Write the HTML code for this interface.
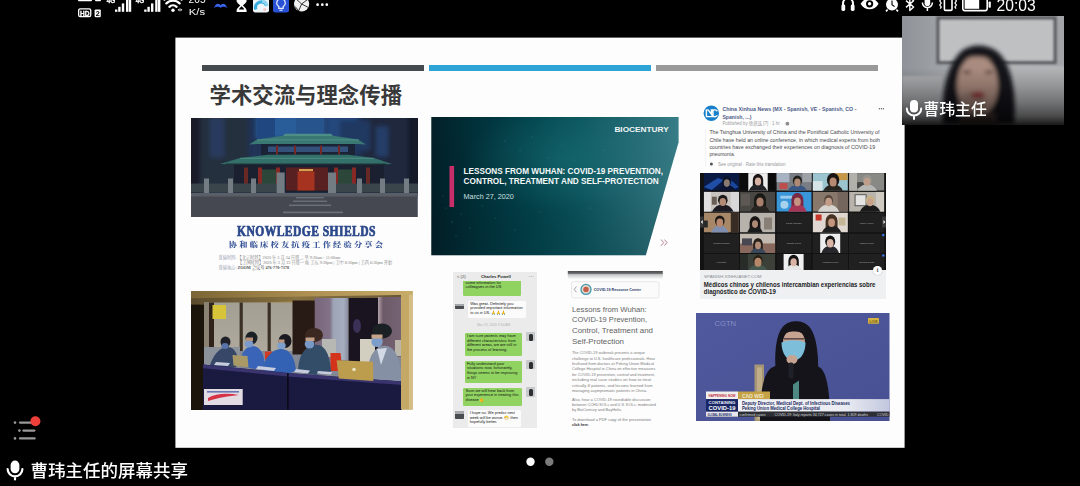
<!DOCTYPE html>
<html lang="zh">
<head>
<meta charset="utf-8">
<title>曹玮主任的屏幕共享</title>
<style>
html,body{margin:0;padding:0;background:#000;}
body{width:1080px;height:486px;overflow:hidden;position:relative;font-family:"Liberation Sans","Noto Sans CJK SC",sans-serif;color:#fff;}
.abs{position:absolute;}
.t{position:absolute;white-space:nowrap;line-height:1;}
#slide{position:absolute;left:175px;top:37px;width:730px;height:411px;overflow:hidden;}
#slide .abs,#slide .t{position:absolute;}
/* coordinates inside #slide are page coords via wrapper shift */
#in{position:absolute;left:-175px;top:-37px;width:1080px;height:486px;opacity:.999;will-change:opacity;}
.bar{position:absolute;top:65px;height:6px;}
</style>
</head>
<body>
<div id="root" style="position:absolute;left:0;top:0;width:1080px;height:486px;overflow:hidden;opacity:.999;will-change:opacity;filter:blur(.4px);">

<!-- ===== shared screen slide ===== -->
<div id="slide"><div id="in">
  <svg class="abs" style="left:175px;top:37px" width="730" height="411" viewBox="175 37 730 411"><rect x="175.400" y="37.600" width="729.200" height="410.200" fill="#ffffff"/></svg>
  <div class="bar" style="left:202px;width:222px;background:#474c51;"></div>
  <div class="bar" style="left:429px;width:221.5px;background:#2fa5d8;"></div>
  <div class="bar" style="left:656px;width:221.5px;background:#9b9b9b;"></div>
  <div class="t" id="title" style="left:209.5px;top:86px;font-size:21.4px;font-weight:bold;color:#3b3b3b;">学术交流与理念传播</div>

  <!-- temple photo -->
<svg class="abs" style="left:191px;top:117.500px" width="226.500" height="99.500" viewBox="191 117.500 226.500 99.500">
  <defs>
    <filter id="b1" x="-5%" y="-5%" width="110%" height="110%"><feGaussianBlur stdDeviation=".7"/></filter>
    <filter id="b2" x="-10%" y="-10%" width="120%" height="120%"><feGaussianBlur stdDeviation="2"/></filter>
    <linearGradient id="sky" x1="0" y1="0" x2="0" y2="1"><stop offset="0" stop-color="#213358"/><stop offset="1" stop-color="#27395a"/></linearGradient>
  </defs>
  <rect x="191" y="117.500" width="226.500" height="99.500" fill="url(#sky)"/>
  <g filter="url(#b2)">
    <rect x="186" y="112" width="62" height="80" fill="#283041"/><rect x="186" y="112" width="14" height="90" fill="#1a1f2b"/>
    <rect x="210" y="117" width="14" height="40" fill="#2a3d60"/>
    <rect x="256" y="114" width="68" height="24" fill="#2c5e9c"/>
    <rect x="326" y="114" width="32" height="24" fill="#27497e"/>
    <rect x="362" y="112" width="62" height="82" fill="#222c3f"/><rect x="408" y="112" width="14" height="82" fill="#171d2a"/><rect x="340" y="120" width="30" height="30" fill="#213a64"/>
    <rect x="376" y="126" width="12" height="30" fill="#27406a"/>
  </g>
  <g filter="url(#b1)">
    <!-- building towers behind -->
    <rect x="257" y="117" width="18" height="22" fill="#234a82"/>
    <rect x="296" y="117" width="28" height="20" fill="#2a5690"/>
    <!-- upper roof -->
    <path d="M249 144l8-5 29-4.200h44l28 4.200 8 5-10-.500h-97z" fill="#3a7a74"/>
    <path d="M283 135.600h50l-2-2.400h-46z" fill="#4f9088"/>
    <path d="M257 139.400h102" stroke="#5c9c92" stroke-width=".7"/>
    <!-- upper floor -->
    <rect x="261" y="143.500" width="94" height="11.500" fill="#1b2838"/>
    <rect x="268" y="146" width="80" height="5.500" fill="#36527c"/>
    <g fill="#7a2a28"><rect x="276" y="145" width="2" height="9"/><rect x="294" y="145" width="2" height="9"/><rect x="320" y="145" width="2" height="9"/><rect x="338" y="145" width="2" height="9"/></g>
    <!-- lower roof -->
    <path d="M220 163.500l20-6 28-3.300h80l26 3.300 18 6-14 .500h-144z" fill="#35726c"/>
    <path d="M240 157.800h134" stroke="#5c9c92" stroke-width=".7"/>
    <path d="M226 163.600h160" stroke="#1a2a30" stroke-width="1"/>
    <!-- lower floor -->
    <rect x="234" y="164" width="150" height="28" fill="#1a2430"/>
    <rect x="244" y="167" width="4" height="22" fill="#6a2a28"/><rect x="258" y="167" width="4" height="22" fill="#8a2c26"/>
    <rect x="276" y="167" width="4" height="22" fill="#8a2c26"/><rect x="352" y="167" width="4" height="22" fill="#8a2c26"/>
    <rect x="366" y="167" width="4" height="22" fill="#6a2a28"/><rect x="334" y="167" width="4" height="22" fill="#8a2c26"/>
    <rect x="262" y="169" width="14" height="16" fill="#2f4a3a"/><rect x="338" y="169" width="14" height="16" fill="#2f4a3a"/>
    <rect x="286" y="167" width="42" height="23" fill="#5a2320"/>
    <rect x="297.500" y="171" width="17" height="19" fill="#a83520"/>
    <rect x="299" y="168.500" width="14" height="2.200" fill="#d8a050"/>
    <!-- fence -->
    <rect x="191" y="183" width="92" height="9" fill="#3a464e"/><rect x="330" y="183" width="88" height="9" fill="#3a464e"/>
    <g fill="#757e84">
      <rect x="204" y="178" width="5" height="15"/><rect x="228" y="178" width="5" height="15"/><rect x="251" y="178" width="5" height="15"/>
      <rect x="276.700" y="172" width="8" height="22.500"/><rect x="328" y="172" width="8" height="22.500"/>
      <rect x="357" y="178" width="5" height="15"/><rect x="380" y="178" width="5" height="15"/><rect x="404" y="178" width="5" height="15"/>
    </g>
    <!-- ground -->
    <rect x="191" y="192.500" width="226.500" height="25" fill="#464a52"/>
    <rect x="191" y="192.500" width="226.500" height="3.500" fill="#5c6168"/>
    <g fill="#6c7178">
      <rect x="296" y="196.500" width="28" height="1.400"/><rect x="293" y="200" width="34" height="1.500"/><rect x="289" y="204" width="42" height="1.600"/><rect x="283" y="211" width="60" height="1.800"/>
    </g>
  </g>
</svg>

  <!-- knowledge shields captions -->
<div class="t" id="ks" style="left:237px;top:225.300px;font-family:'Liberation Serif','DejaVu Serif',serif;font-weight:bold;font-size:13.600px;color:#2c4a8c;letter-spacing:.5px;-webkit-text-stroke:.7px #2c4a8c;transform-origin:0 0;transform:scaleX(.852);">KNOWLEDGE SHIELDS</div>
<div class="t" id="ks2" style="left:228.800px;top:241.600px;font-family:'Liberation Serif','Noto Serif CJK SC',serif;font-weight:900;font-size:8.200px;color:#3d5a9c;letter-spacing:2.240px;transform-origin:0 0;transform:scaleY(.86);">协和临床校友抗疫工作经验分享会</div>
<div class="t" style="left:218.500px;top:256px;font-family:'Liberation Serif','Noto Serif CJK SC',serif;font-size:4.200px;color:#808080;"><span style="color:#8a94a8">直播时间:</span> 【北京时间】2020 年 3 月 24 日周二 早 9:30am - 11:00am</div>
<div class="t" style="left:238px;top:261px;font-family:'Liberation Serif','Noto Serif CJK SC',serif;font-size:4.200px;color:#808080;">【美国时间】2020 年 3 月 23 日周一 晚 美东 9:30pm | 美中 8:30pm | 美西 6:30pm 开始</div>
<div class="t" style="left:218.500px;top:266.400px;font-family:'Liberation Serif','Noto Serif CJK SC',serif;font-size:4.200px;color:#555;"><span style="color:#8a94a8">直播地点:</span> <b>ZOOM</b> 会议号 <b>476-770-7378</b></div>

  <!-- conference room photo -->
<svg class="abs" style="left:191px;top:291px" width="221.500" height="118.500" viewBox="191 291 221.500 118.500">
  <defs>
    <filter id="g1" x="-5%" y="-5%" width="110%" height="110%"><feGaussianBlur stdDeviation=".75"/></filter>
    <linearGradient id="gold" x1="0" y1="0" x2="1" y2="0"><stop offset="0" stop-color="#7d6637"/><stop offset=".5" stop-color="#ad9052"/><stop offset="1" stop-color="#c9ae6c"/></linearGradient>
    <linearGradient id="ceil" x1="0" y1="0" x2="1" y2="0"><stop offset="0" stop-color="#5e4e2e"/><stop offset=".5" stop-color="#8a7444"/><stop offset="1" stop-color="#6a5838"/></linearGradient>
    <linearGradient id="cur1" x1="0" y1="0" x2="1" y2="0"><stop offset="0" stop-color="#7a687c"/><stop offset=".45" stop-color="#84748a"/><stop offset=".55" stop-color="#9ea6b8"/><stop offset=".85" stop-color="#a8b0c0"/><stop offset="1" stop-color="#868a9e"/></linearGradient>
    <linearGradient id="cur2" x1="0" y1="0" x2="1" y2="0"><stop offset="0" stop-color="#b4a4a8"/><stop offset=".22" stop-color="#6e5c6a"/><stop offset="1" stop-color="#786674"/></linearGradient>
    <linearGradient id="pan" x1="0" y1="0" x2="0" y2="1"><stop offset="0" stop-color="#a5a195"/><stop offset="1" stop-color="#b0ab9e"/></linearGradient>
  </defs>
  <rect x="191" y="291" width="221.500" height="118.500" fill="url(#gold)"/>
  <g filter="url(#g1)">
    <path d="M191 297.500l211-3.500v4l-211 6.500z" fill="url(#ceil)"/>
    <rect x="189" y="304.500" width="15.500" height="108" fill="#1b1511"/>
    <rect x="204" y="340" width="197.500" height="42" fill="#858a96"/>
    <!-- wall panels -->
    <rect x="204" y="302.500" width="96" height="48.500" fill="url(#pan)"/>
    <rect x="204" y="302.500" width="5" height="48.500" fill="#8c8474"/>
    <rect x="209" y="302.500" width="5" height="50" fill="#30261e"/>
    <rect x="239.600" y="302.500" width="3.200" height="48.500" fill="#3c3228"/>
    <rect x="267.600" y="302.500" width="3.200" height="48.500" fill="#3c3228"/>
    <rect x="212.500" y="305" width="13.500" height="14" fill="#dac63a"/>
    <!-- dark door -->
    <rect x="292.500" y="300.500" width="23" height="54" fill="#2c1c16"/>
    <!-- curtain 1 -->
    <rect x="314.700" y="298" width="34" height="62" fill="url(#cur1)"/>
    <!-- dark gap -->
    <rect x="348.600" y="298" width="30" height="66" fill="#1f1721"/>
    <ellipse cx="357" cy="326" rx="4" ry="7" fill="#3c3058"/>
    <!-- curtain 2 -->
    <rect x="378" y="297" width="23.500" height="60" fill="url(#cur2)"/>
    <!-- background chairs / people behind -->
    <rect x="204" y="347" width="36" height="20" fill="#8e949c"/>
    <rect x="322" y="339" width="14" height="18" fill="#b9b9b6"/>
    <rect x="360" y="339" width="15" height="24" fill="#d4d0c2"/>
    <rect x="395" y="340" width="7" height="16" fill="#bdb8ac"/>
    <!-- red chair bits -->
    <rect x="265" y="351.500" width="7" height="8" fill="#d23a26"/>
    <path d="M330.500 353h10l2 18h-12z" fill="#d4341f"/>
    <!-- people bodies -->
    <path d="M210 365c3-9 9-17 16-18s11 5 13 14l-3 6-22 1z" fill="#39486a"/>
    <path d="M240 366c0-12 5-19 12-20 8 0 12 7 13 20l-10 3z" fill="#3a66ba"/>
    <path d="M262 370c3-12 9-20 18-21s15 8 16 22l-12 4z" fill="#3664b6"/>
    <path d="M298 372c0-14 5-25 16-27s16 10 17 27l-16 3z" fill="#34506a"/>
    <path d="M367 381c0-20 5-33 16-35s18 12 19 36l-14 1z" fill="#8792a6"/>
    <path d="M377 349l4 16 6-17z" fill="#d5dbe6"/>
    <!-- heads -->
    <ellipse cx="225.500" cy="342" rx="5" ry="5.500" fill="#24242a"/><ellipse cx="225" cy="346" rx="3.600" ry="3" fill="#5a74ac"/>
    <ellipse cx="251.500" cy="338" rx="6" ry="6.500" fill="#1f2026"/><ellipse cx="249" cy="344" rx="4.400" ry="3.400" fill="#7c9ccc"/>
    <rect x="246" y="337.500" width="7" height="3.500" fill="#b8947c"/>
    <ellipse cx="285" cy="341" rx="6.500" ry="7" fill="#1c1c22"/><ellipse cx="281.500" cy="345.500" rx="4.200" ry="3.600" fill="#80a2d0"/>
    <rect x="278.500" y="339.500" width="6" height="3.200" fill="#bf9a84"/>
    <ellipse cx="314" cy="335" rx="9" ry="7" fill="#3e2c22"/><ellipse cx="309.500" cy="344" rx="4.800" ry="4.600" fill="#7a9ac8"/>
    <rect x="305.500" y="337.500" width="9" height="3.500" fill="#c3a088"/>
    <ellipse cx="382" cy="331" rx="10" ry="7.500" fill="#1c2028"/><ellipse cx="377" cy="341.500" rx="5.600" ry="5.600" fill="#7f9fcc"/>
    <rect x="371.500" y="334.500" width="11" height="4" fill="#c9a58a"/>
    <!-- table -->
    <path d="M203 364.400l84.700 8.600 114.300 8.500v30h-199z" fill="#1c1a42"/>
    <path d="M203 364.400l84.700 8.600 114.300 8.500v3.500l-114.300-8.500-84.700-8.300z" fill="#3a3670"/>
    <path d="M287 373v40h1.600v-40z" fill="#0c0b1c"/>
    <!-- papers -->
    <path d="M216 362l14 1-2 3-14-1zM258 366l18 2-2 3-18-2zM296 369l14 1.500-2 3-14-1.500zM318 371l14 1-1 2.500-14-1z" fill="#c9cfe0"/>
    <!-- laptops -->
    <path d="M232.500 355l15 1 1 11.500-15-2z" fill="#ab9b68"/>
    <path d="M336.600 360.300l36.400 1.500.300 19.200-34.500-2.500z" fill="#bd9f50"/>
    <circle cx="354" cy="369.500" r="1.800" fill="#ece4c6"/>
    <!-- sign -->
    <rect x="204" y="389" width="38.700" height="16" fill="#e4dde4"/>
    <path d="M208 398c8-5 20-5 31-3-10 1-22 3-31 6z" fill="#d8344c"/>
    <rect x="207" y="391" width="32" height="1.600" fill="#6a78b8"/>
  </g>
  <rect x="401" y="291" width="11.500" height="118.500" fill="#c6aa68"/>
  <rect x="409" y="291" width="3.500" height="118.500" fill="#d6c088"/>
  <path d="M191 291h221.500v3.800l-221.500 3.400z" fill="url(#gold)"/>
</svg>

  <!-- biocentury title card -->
<svg class="abs" style="left:431px;top:117px" width="250" height="139" viewBox="431 117 250 139">
  <defs>
    <linearGradient id="tl1" x1="0" y1="0" x2="1" y2="0">
      <stop offset="0" stop-color="#04222a"/><stop offset=".2" stop-color="#03353e"/><stop offset=".4" stop-color="#04464f"/><stop offset=".6" stop-color="#0e5861"/><stop offset=".8" stop-color="#256c76"/><stop offset="1" stop-color="#3a808a"/>
    </linearGradient>
    <linearGradient id="tl2" x1="0" y1="0" x2="0" y2="1">
      <stop offset="0" stop-color="#000" stop-opacity="0"/><stop offset=".55" stop-color="#000" stop-opacity=".04"/><stop offset="1" stop-color="#021a22" stop-opacity=".2"/>
    </linearGradient>
    <radialGradient id="tl3" cx=".52" cy=".3" r=".38"><stop offset="0" stop-color="#2f9a9c" stop-opacity=".26"/><stop offset="1" stop-color="#3a9aa0" stop-opacity="0"/></radialGradient>
    <clipPath id="tlc"><path d="M431.300 116.900h247.300v25.300l-32.800 113h-214.500z"/></clipPath>
  </defs>
  <g clip-path="url(#tlc)">
    <rect x="431" y="117" width="250" height="139" fill="url(#tl1)"/>
    <rect x="431" y="117" width="250" height="139" fill="url(#tl3)"/>
    <rect x="431" y="117" width="250" height="139" fill="url(#tl2)"/>
    <g fill="#5fc0c0" opacity=".35">
      <circle cx="446" cy="208" r=".6"/><circle cx="452" cy="222" r=".7"/><circle cx="461" cy="214" r=".5"/><circle cx="470" cy="228" r=".6"/><circle cx="482" cy="206" r=".5"/><circle cx="495" cy="218" r=".6"/><circle cx="505" cy="141" r=".6"/><circle cx="520" cy="150" r=".5"/><circle cx="532" cy="137" r=".6"/><circle cx="548" cy="158" r=".5"/><circle cx="562" cy="144" r=".6"/><circle cx="575" cy="160" r=".5"/><circle cx="590" cy="208" r=".6"/><circle cx="604" cy="150" r=".5"/><circle cx="540" cy="212" r=".6"/><circle cx="515" cy="230" r=".5"/><circle cx="456" cy="236" r=".6"/><circle cx="443" cy="196" r=".5"/>
    </g>
  </g>
  <rect x="449.500" y="166" width="4.600" height="41" fill="#c9306c"/>
  <text x="614.400" y="132.400" font-family="Liberation Sans, sans-serif" font-weight="bold" font-size="7.700" fill="#f4f8f8" textLength="54.400" lengthAdjust="spacingAndGlyphs">BIOCENTURY</text>
  <text x="463.600" y="174.100" font-family="Liberation Sans, sans-serif" font-weight="bold" font-size="8.500" fill="#f6fafa" textLength="199.400" lengthAdjust="spacingAndGlyphs">LESSONS FROM WUHAN: COVID-19 PREVENTION,</text>
  <text x="463.600" y="184.200" font-family="Liberation Sans, sans-serif" font-weight="bold" font-size="8.500" fill="#f6fafa" textLength="195.200" lengthAdjust="spacingAndGlyphs">CONTROL, TREATMENT AND SELF-PROTECTION</text>
  <text x="463.600" y="198.600" font-family="Liberation Sans, sans-serif" font-size="7.300" fill="#cfe0e2" textLength="50.200" lengthAdjust="spacingAndGlyphs">March 27, 2020</text>
  <path d="M661 239.600l2.800 3-2.800 3M664.400 239.600l2.800 3-2.800 3" fill="none" stroke="#b67f8c" stroke-width="1"/>
</svg>

  <!-- wechat screenshot -->
<style>
#chat{position:absolute;left:453px;top:271.500px;width:83.500px;height:156px;background:#ededed;overflow:hidden;font-size:3.900px;line-height:4.600px;color:#2b3a26;}
#chat .g,#chat .w{position:absolute;border-radius:1.200px;box-sizing:border-box;padding:1.200px 1.800px 0 2.200px;white-space:nowrap;overflow:hidden;-webkit-text-stroke:.05px #2b3a26;}
#chat .g{background:#93d562;}
#chat .w{background:#fdfdfd;color:#444;-webkit-text-stroke:.05px #444;}
#chat .av{position:absolute;width:9px;background:#6d6f72;border-radius:.8px;overflow:hidden;}
</style>
<div id="chat">
  <div class="g" style="left:10.400px;top:4.500px;width:58px;height:19.500px;padding-top:.2px;">we'd love to have you share<br>some information for<br>colleagues in the US</div>
  <div class="abs" style="left:0;top:0;width:83.500px;height:9px;background:#ededed;"></div>
  <div class="t" style="left:4px;top:3px;font-size:4.200px;color:#444;">&lt; (2)</div>
  <div class="t" style="left:28px;top:3.100px;font-size:4.200px;font-weight:bold;color:#2b2b2b;">Charles Powell</div>
  <div class="t" style="left:75.500px;top:2px;font-size:5px;color:#444;letter-spacing:.2px;">···</div>

  <div class="av" style="left:2.200px;top:32px;height:5.600px;background:#4c4e52;"><div class="abs" style="left:0;top:0;width:9px;height:2px;background:#a8aaae;"></div></div>
  <div class="w" style="left:15px;top:29px;width:57.600px;height:17.600px;">Was great. Definitely you<br>provided important information<br>to us in US. 🙏🙏🙏</div>
  <div class="t" style="left:24px;top:52.600px;font-size:3.400px;color:#b4b4b4;">Mar 29, 2020 9:54 AM</div>

  <div class="g" style="left:11.700px;top:61.400px;width:57.600px;height:22.800px;">I am sure patients may have<br>different characteristics from<br>different areas, we are still in<br>the process of learning.</div>
  <div class="av" style="left:73.400px;top:60.200px;height:9.800px;background:#c9cbcc;"><div class="abs" style="left:3px;top:2px;width:3.400px;height:7px;background:#2e3032;border-radius:1.500px;"></div></div>

  <div class="g" style="left:11.700px;top:89.200px;width:57.600px;height:22.800px;">Fully understand your<br>situations now. fortunately,<br>things seems to be improving<br>in NY</div>
  <div class="av" style="left:73.400px;top:88.200px;height:9.800px;background:#c9cbcc;"><div class="abs" style="left:3px;top:2px;width:3.400px;height:7px;background:#2e3032;border-radius:1.500px;"></div></div>

  <div class="g" style="left:10.200px;top:116px;width:59.200px;height:18.600px;">Soon we will hear back from<br>your experience in treating this<br>disease👍</div>
  <div class="av" style="left:73.400px;top:115.600px;height:9.800px;background:#c9cbcc;"><div class="abs" style="left:3px;top:2px;width:3.400px;height:7px;background:#2e3032;border-radius:1.500px;"></div></div>

  <div class="av" style="left:2.200px;top:139.500px;height:8px;background:#4c4e52;"><div class="abs" style="left:0;top:0;width:9px;height:2.600px;background:#a8aaae;"></div></div>
  <div class="w" style="left:14.500px;top:138.600px;width:53px;height:16.500px;">I hope so. We predict next<br>week will be worse. 😷 then<br>hopefully better.</div>
</div>

  <!-- biocentury article screenshot -->
<svg class="abs" style="left:566px;top:270px" width="100" height="160" viewBox="566 270 100 160" font-family="Liberation Sans, sans-serif">
  <defs>
    <linearGradient id="ash" x1="0" y1="0" x2="0" y2="1"><stop offset="0" stop-color="#4a4c4e"/><stop offset=".3" stop-color="#6b6d6f"/><stop offset=".45" stop-color="#c8c9ca"/><stop offset="1" stop-color="#fdfdfd"/></linearGradient>
  </defs>
  <rect x="567.800" y="271" width="95" height="8" fill="url(#ash)"/>
  <rect x="571.500" y="281.700" width="87.500" height="16.300" rx="2" fill="#fdfdfd" stroke="#dcdcdc" stroke-width=".6"/>
  <path d="M576.400 286.600l-2.200 2.800 2.200 2.800" fill="none" stroke="#8a8a8a" stroke-width=".8"/>
  <circle cx="586" cy="289.400" r="5" fill="#e9d6c4" stroke="#3f9db6" stroke-width="1.300"/>
  <circle cx="586" cy="289.400" r="2.700" fill="#c4604e"/>
  <text x="593.700" y="290.700" font-size="3.900" font-weight="bold" fill="#2b3b6c" textLength="47.300" lengthAdjust="spacingAndGlyphs">COVID-19 Resource Center</text>
  <g font-size="7.900" fill="#646464">
    <text x="572" y="311.700" textLength="74.700" lengthAdjust="spacingAndGlyphs">Lessons from Wuhan:</text>
    <text x="572" y="322.400" textLength="75" lengthAdjust="spacingAndGlyphs">COVID-19 Prevention,</text>
    <text x="572" y="333.100" textLength="81" lengthAdjust="spacingAndGlyphs">Control, Treatment and</text>
    <text x="572" y="343.800" textLength="52" lengthAdjust="spacingAndGlyphs">Self-Protection</text>
  </g>
  <g font-size="3.900" fill="#808080">
    <text x="572" y="354.200" textLength="73" lengthAdjust="spacingAndGlyphs">The COVID-19 outbreak presents a unique</text>
    <text x="572" y="359.600" textLength="83" lengthAdjust="spacingAndGlyphs">challenge to U.S. healthcare professionals. Hear</text>
    <text x="572" y="365" textLength="82" lengthAdjust="spacingAndGlyphs">firsthand from doctors at Peking Union Medical</text>
    <text x="572" y="370.400" textLength="83.500" lengthAdjust="spacingAndGlyphs">College Hospital in China on effective measures</text>
    <text x="572" y="375.800" textLength="83" lengthAdjust="spacingAndGlyphs">for COVID-19 prevention, control and treatment,</text>
    <text x="572" y="381.200" textLength="79" lengthAdjust="spacingAndGlyphs">including real case studies on how to treat</text>
    <text x="572" y="386.500" textLength="80.500" lengthAdjust="spacingAndGlyphs">critically ill patients, and lessons learned from</text>
    <text x="572" y="391.800" textLength="75" lengthAdjust="spacingAndGlyphs">managing asymptomatic patients in China.</text>
    <text x="572" y="400.600" textLength="78.500" lengthAdjust="spacingAndGlyphs">Also, hear a COVID-19 roundtable discussion</text>
    <text x="572" y="406" textLength="84" lengthAdjust="spacingAndGlyphs">between CCHU KOLs and U.S. KOLs, moderated</text>
    <text x="572" y="411.300" textLength="50" lengthAdjust="spacingAndGlyphs">by BioCentury and BayHelix.</text>
    <text x="572" y="420.500" textLength="79" lengthAdjust="spacingAndGlyphs">To download a PDF copy of the presentation</text>
    <text x="572" y="425.600" font-weight="bold" fill="#333" textLength="17" lengthAdjust="spacingAndGlyphs">click here.</text>
  </g>
</svg>

  <!-- facebook post -->
<svg class="abs" style="left:698px;top:100px" width="195" height="72" viewBox="698 100 195 72" font-family="Liberation Sans, Noto Sans CJK SC, sans-serif">
  <rect x="705.300" y="129" width=".6" height="38" fill="#eeeeef"/>
  <circle cx="711.300" cy="113.200" r="7.700" fill="#1a82cc"/>
  <path d="M706.400 116.600v-6.600l2 .1 3 4.200v-4.300h1.600v6.600zM717.400 111.200a3.400 3.400 0 1 0 0 4.200" fill="none" stroke="#fff" stroke-width="1.400"/>
  <g font-weight="bold" font-size="6" fill="#50608c">
    <text x="722.400" y="111.100" textLength="134" lengthAdjust="spacingAndGlyphs">China Xinhua News (MX - Spanish, VE - Spanish, CO -</text>
    <text x="722.400" y="119" textLength="29" lengthAdjust="spacingAndGlyphs">Spanish, ...)</text>
  </g>
  <text x="722.400" y="125.300" font-size="4.700" fill="#9a9ca0" textLength="60" lengthAdjust="spacingAndGlyphs">Published by 徐燕连 [?] · 1 hr · </text>
  <circle cx="787.400" cy="123.700" r="1.900" fill="#8c8e92"/>
  <circle cx="879.400" cy="108.700" r=".7" fill="#666"/><circle cx="881.400" cy="108.700" r=".7" fill="#666"/><circle cx="883.400" cy="108.700" r=".7" fill="#666"/>
  <g font-size="5.900" fill="#4a4c50">
    <text x="709.400" y="134.300" textLength="170" lengthAdjust="spacingAndGlyphs">The Tsinghua University of China and the Pontifical Catholic University of</text>
    <text x="709.400" y="141.900" textLength="170.600" lengthAdjust="spacingAndGlyphs">Chile have held an online conference, in which medical experts from both</text>
    <text x="709.400" y="149.200" textLength="165.800" lengthAdjust="spacingAndGlyphs">countries have exchanged their experiences on diagnosis of COVID-19</text>
    <text x="709.400" y="155.900" textLength="25.600" lengthAdjust="spacingAndGlyphs">pneumonia.</text>
  </g>
  <circle cx="711.400" cy="164.100" r="1.500" fill="#555"/>
  <text x="718" y="165.700" font-size="4.500" fill="#9a9ca0" textLength="67.400" lengthAdjust="spacingAndGlyphs">See original · Rate this translation</text>
</svg>

  <!-- zoom gallery -->
<svg class="abs" style="left:699.500px;top:172.500px" width="186.500" height="97.500" viewBox="699.500 172.500 186.500 97.500" font-family="Liberation Sans, sans-serif">
<defs><filter id="zb" x="-5%" y="-5%" width="110%" height="110%"><feGaussianBlur stdDeviation=".55"/></filter>
<clipPath id="zc00"><rect x="703.3" y="172.6" width="35.3" height="17.6"/></clipPath>
<clipPath id="zc01"><rect x="739.5" y="172.6" width="35.3" height="17.6"/></clipPath>
<clipPath id="zc02"><rect x="775.9" y="172.6" width="35.3" height="17.6"/></clipPath>
<clipPath id="zc03"><rect x="812.1" y="172.6" width="35.3" height="17.6"/></clipPath>
<clipPath id="zc04"><rect x="848.6" y="172.6" width="35.3" height="17.6"/></clipPath>
<clipPath id="zc10"><rect x="703.3" y="191.2" width="35.3" height="20.0"/></clipPath>
<clipPath id="zc11"><rect x="739.5" y="191.2" width="35.3" height="20.0"/></clipPath>
<clipPath id="zc12"><rect x="775.9" y="191.2" width="35.3" height="20.0"/></clipPath>
<clipPath id="zc13"><rect x="812.1" y="191.2" width="35.3" height="20.0"/></clipPath>
<clipPath id="zc14"><rect x="848.6" y="191.2" width="35.3" height="20.0"/></clipPath>
<clipPath id="zc20"><rect x="703.3" y="212.0" width="35.3" height="20.0"/></clipPath>
<clipPath id="zc21"><rect x="739.5" y="212.0" width="35.3" height="20.0"/></clipPath>
<clipPath id="zc22"><rect x="775.9" y="212.0" width="35.3" height="20.0"/></clipPath>
<clipPath id="zc23"><rect x="812.1" y="212.0" width="35.3" height="20.0"/></clipPath>
<clipPath id="zc24"><rect x="848.6" y="212.0" width="35.3" height="20.0"/></clipPath>
<clipPath id="zc30"><rect x="703.3" y="232.9" width="35.3" height="19.6"/></clipPath>
<clipPath id="zc31"><rect x="739.5" y="232.9" width="35.3" height="19.6"/></clipPath>
<clipPath id="zc32"><rect x="775.9" y="232.9" width="35.3" height="19.6"/></clipPath>
<clipPath id="zc33"><rect x="812.1" y="232.9" width="35.3" height="19.6"/></clipPath>
<clipPath id="zc34"><rect x="848.6" y="232.9" width="35.3" height="19.6"/></clipPath>
<clipPath id="zc40"><rect x="703.3" y="253.4" width="35.3" height="16.6"/></clipPath>
<clipPath id="zc41"><rect x="739.5" y="253.4" width="35.3" height="16.6"/></clipPath>
<clipPath id="zc42"><rect x="775.9" y="253.4" width="35.3" height="16.6"/></clipPath>
<clipPath id="zc43"><rect x="812.1" y="253.4" width="35.3" height="16.6"/></clipPath>
<clipPath id="zc44"><rect x="848.6" y="253.4" width="35.3" height="16.6"/></clipPath>
</defs>
<rect x="699.500" y="172.500" width="186.500" height="97.500" fill="#141414"/>
<g filter="url(#zb)">
<g clip-path="url(#zc00)"><rect x="703.3" y="172.6" width="35.3" height="17.6" fill="#0b1a44"/><path d="M703.3 186.6l14-9 6 2-12 10z" fill="#2050a8"/><path d="M738.3 186.6l-10-9-5 3 8 9z" fill="#1c48a0"/><ellipse cx="726.3" cy="180.8" rx="4.4" ry="5.1" fill="#101828"/><path d="M717.3 191.1 c2.7-8.7 15.3-8.7 18.0 0z" fill="#0c1430"/><ellipse cx="726.3" cy="182.6" rx="3.0" ry="3.8" fill="#8c7c72"/></g>
<g clip-path="url(#zc01)"><rect x="739.5" y="172.6" width="35.3" height="17.6" fill="#0e0e0e"/><rect x="747.8" y="172.6" width="19.400" height="18" fill="#eeeeee"/><path d="M752.3 180.0 c0-8.8 10.4-8.8 10.4 0 v8.2 h-10.4 z" fill="#1a1616"/><path d="M748.0 191.1 c2.9-10.2 16.1-10.2 19.0 0z" fill="#26262a"/><ellipse cx="757.5" cy="181.0" rx="3.2" ry="4.0" fill="#d9b4a4"/></g>
<g clip-path="url(#zc02)"><rect x="775.9" y="172.6" width="35.3" height="17.6" fill="#7c8086"/><rect x="775.9" y="172.6" width="13" height="9" fill="#a9b4c4"/><rect x="778.9" y="182.6" width="8" height="6" fill="#c05050"/><rect x="801.9" y="172.6" width="10" height="9" fill="#a0a4a8"/><ellipse cx="796.9" cy="180.2" rx="4.6" ry="5.3" fill="#22201e"/><path d="M786.9 191.1 c3.0-9.3 17.0-9.3 20.0 0z" fill="#3c5a86"/><ellipse cx="796.9" cy="182.0" rx="3.2" ry="4.0" fill="#b08c78"/></g>
<g clip-path="url(#zc03)"><rect x="812.1" y="172.6" width="35.3" height="17.6" fill="#9ec6d0"/><rect x="833.1" y="172.6" width="14" height="7" fill="#c89a4a"/><rect x="812.1" y="180.6" width="10" height="10" fill="#d8e6ea"/><ellipse cx="832.6" cy="179.6" rx="6.2" ry="7.1" fill="#1e1814"/><path d="M822.6 191.1 c3.0-9.9 17.0-9.9 20.0 0z" fill="#2a2624"/><ellipse cx="832.6" cy="181.4" rx="3.6" ry="4.5" fill="#b98c74"/></g>
<g clip-path="url(#zc04)"><rect x="848.6" y="172.6" width="35.3" height="17.6" fill="#8a8a86"/><rect x="848.6" y="172.6" width="8" height="18" fill="#b4b2ac"/><rect x="856.6" y="181.6" width="10" height="6" fill="#4a4a48"/><ellipse cx="866.6" cy="179.6" rx="4.6" ry="5.3" fill="#9a9690"/><path d="M856.6 191.1 c3.0-9.9 17.0-9.9 20.0 0z" fill="#b8b8b4"/><ellipse cx="866.6" cy="181.4" rx="3.3" ry="4.1" fill="#c0a08c"/></g>
<g clip-path="url(#zc10)"><rect x="703.3" y="191.2" width="35.3" height="20.0" fill="#c9c6c2"/><rect x="703.3" y="191.2" width="7" height="20" fill="#e2e2e2"/><rect x="730.3" y="191.2" width="9" height="20" fill="#dadada"/><rect x="711.3" y="196.2" width="5" height="8" fill="#6a6058"/><ellipse cx="722.3" cy="199.7" rx="4.8" ry="5.5" fill="#1e1c1c"/><path d="M711.3 212.2 c3.3-10.8 18.7-10.8 22.0 0z" fill="#1c1e24"/><ellipse cx="722.3" cy="201.5" rx="3.3" ry="4.1" fill="#b58c76"/></g>
<g clip-path="url(#zc11)"><rect x="739.5" y="191.2" width="35.3" height="20.0" fill="#4b4845"/><rect x="740.5" y="193.2" width="9" height="12" fill="#5e5a56"/><path d="M753.5 200.5 c0-10.2 12.0-10.2 12.0 0 v8.8 h-12.0 z" fill="#1e1a18"/><path d="M749.5 212.2 c3.0-10.8 17.0-10.8 20.0 0z" fill="#2a2624"/><ellipse cx="759.5" cy="201.5" rx="3.6" ry="4.5" fill="#a8826e"/></g>
<g clip-path="url(#zc12)"><rect x="775.9" y="191.2" width="35.3" height="20.0" fill="#3a98da"/><circle cx="783.9" cy="204.2" r="4" fill="#a8d4f0"/><rect x="779.9" y="195.2" width="12" height="3" fill="#9cccee"/><path d="M790.9 200.2 c0-10.2 12.0-10.2 12.0 0 v9.0 h-12.0 z" fill="#7c2a44"/><path d="M787.4 212.2 c2.9-11.2 16.1-11.2 19.0 0z" fill="#a83858"/><ellipse cx="796.9" cy="201.2" rx="3.4" ry="4.2" fill="#c89484"/></g>
<g clip-path="url(#zc13)"><rect x="812.1" y="191.2" width="35.3" height="20.0" fill="#8a7a6e"/><rect x="837.1" y="191.2" width="10" height="20" fill="#76685e"/><ellipse cx="828.1" cy="199.7" rx="4.4" ry="5.1" fill="#5a4a40"/><path d="M817.1 212.2 c3.3-10.8 18.7-10.8 22.0 0z" fill="#d9d6d2"/><ellipse cx="828.1" cy="201.5" rx="3.4" ry="4.2" fill="#c4a08c"/></g>
<g clip-path="url(#zc14)"><rect x="848.6" y="191.2" width="35.3" height="20.0" fill="#bab6ae"/><rect x="854.6" y="194.2" width="11" height="11" fill="#e6e6e4" stroke="#5a5a58" stroke-width="1"/><rect x="875.6" y="191.2" width="8" height="20" fill="#d0ccc4"/><ellipse cx="869.6" cy="200.0" rx="4.4" ry="5.1" fill="#c9b48a"/><path d="M859.1 212.2 c3.1-10.5 17.8-10.5 21.0 0z" fill="#1c1c1e"/><ellipse cx="869.6" cy="201.8" rx="3.2" ry="4.0" fill="#c8a48e"/></g>
<g clip-path="url(#zc20)"><rect x="703.3" y="212.0" width="35.3" height="20.0" fill="#a88a6a"/><rect x="730.3" y="212.0" width="8" height="20" fill="#3a2e28"/><rect x="702.3" y="220.0" width="5" height="7" fill="#2a2a2a"/><ellipse cx="719.3" cy="220.5" rx="4.8" ry="5.5" fill="#1e1a18"/><path d="M710.3 233.0 c2.7-10.8 15.3-10.8 18.0 0z" fill="#8290b2"/><ellipse cx="719.3" cy="222.3" rx="3.4" ry="4.2" fill="#b98a70"/></g>
<g clip-path="url(#zc21)"><rect x="739.5" y="212.0" width="35.3" height="20.0" fill="#b9b5ae"/><rect x="763.5" y="217.0" width="8" height="12" fill="#8a8278"/><path d="M749.1 222.6 c0-9.2 10.8-9.2 10.8 0 v7.8 h-10.8 z" fill="#1c1816"/><path d="M746.5 233.0 c2.4-9.6 13.6-9.6 16.0 0z" fill="#1e1c1c"/><ellipse cx="754.5" cy="223.6" rx="3.0" ry="3.8" fill="#b08c78"/></g>
<g clip-path="url(#zc22)"><rect x="775.9" y="212.0" width="35.3" height="20.0" fill="#242424"/><text x="793.5" y="223.0" font-size="2.300" fill="#a6a6a6" text-anchor="middle">Diego Guzmán</text></g>
<g clip-path="url(#zc23)"><rect x="812.1" y="212.0" width="35.3" height="20.0" fill="#e2dad2"/><rect x="815.1" y="214.0" width="6" height="6" fill="#c8382c"/><rect x="838.1" y="217.0" width="7" height="8" fill="#c8b89a"/><path d="M825.1 221.3 c0-10.2 12.0-10.2 12.0 0 v8.8 h-12.0 z" fill="#4a3428"/><path d="M821.1 233.0 c3.0-10.8 17.0-10.8 20.0 0z" fill="#242224"/><ellipse cx="831.1" cy="222.3" rx="3.4" ry="4.2" fill="#c49880"/></g>
<g clip-path="url(#zc24)"><rect x="848.6" y="212.0" width="35.3" height="20.0" fill="#242424"/><text x="866.2" y="223.0" font-size="2.300" fill="#a6a6a6" text-anchor="middle">Maria Alvarez</text></g>
<g clip-path="url(#zc30)"><rect x="703.3" y="232.9" width="35.3" height="19.6" fill="#242424"/><text x="720.9" y="243.7" font-size="2.300" fill="#a6a6a6" text-anchor="middle">Mariana Ramos</text></g>
<g clip-path="url(#zc31)"><rect x="739.5" y="232.9" width="35.3" height="19.6" fill="#c4bcb2"/><rect x="739.5" y="242.9" width="35.300" height="10" fill="#8a6a5e"/><rect x="741.5" y="237.9" width="10" height="7" fill="#4a4a52"/><path d="M752.7 243.9 c0-8.2 9.6-8.2 9.6 0 v7.0 h-9.6 z" fill="#2a201c"/><path d="M749.5 253.4 c2.4-8.7 13.6-8.7 16.0 0z" fill="#3a4a5a"/><ellipse cx="757.5" cy="244.9" rx="3.0" ry="3.8" fill="#b48e78"/></g>
<g clip-path="url(#zc32)"><rect x="775.9" y="232.9" width="35.3" height="19.6" fill="#242424"/><text x="793.5" y="243.7" font-size="2.300" fill="#a6a6a6" text-anchor="middle">Juanita López</text></g>
<g clip-path="url(#zc33)"><rect x="812.1" y="232.9" width="35.3" height="19.6" fill="#242424"/><rect x="819.7" y="232.9" width="20" height="20" fill="#f0f0f0"/><ellipse cx="829.7" cy="240.9" rx="5.0" ry="5.8" fill="#141414"/><path d="M820.7 253.4 c2.7-10.8 15.3-10.8 18.0 0z" fill="#2a2a2e"/><ellipse cx="829.7" cy="242.7" rx="3.4" ry="4.2" fill="#dcb8a8"/></g>
<g clip-path="url(#zc34)"><rect x="848.6" y="232.9" width="35.3" height="19.6" fill="#242424"/><text x="866.2" y="243.7" font-size="2.300" fill="#a6a6a6" text-anchor="middle">Gabriela Ruiz</text></g>
<g clip-path="url(#zc40)"><rect x="703.3" y="253.4" width="35.3" height="16.6" fill="#242424"/><text x="720.9" y="262.7" font-size="2.300" fill="#a6a6a6" text-anchor="middle">Luis Soto</text></g>
<g clip-path="url(#zc41)"><rect x="739.5" y="253.4" width="35.3" height="16.6" fill="#3c433b"/><rect x="739.5" y="253.4" width="8" height="17" fill="#2a2e2a"/><ellipse cx="757.5" cy="259.9" rx="4.6" ry="5.3" fill="#2a2018"/><path d="M747.5 271.4 c3.0-9.9 17.0-9.9 20.0 0z" fill="#4a5a52"/><ellipse cx="757.5" cy="261.7" rx="3.6" ry="4.5" fill="#b88a6c"/></g>
<g clip-path="url(#zc42)"><rect x="775.9" y="253.4" width="35.3" height="16.6" fill="#1c1c1c"/><rect x="783.1" y="253.4" width="20" height="17" fill="#f2f2f2"/><path d="M787.9 260.8 c0-8.8 10.4-8.8 10.4 0 v7.5 h-10.4 z" fill="#181414"/><path d="M784.1 270.9 c2.7-9.3 15.3-9.3 18.0 0z" fill="#e8e8e8"/><ellipse cx="793.1" cy="261.8" rx="3.2" ry="4.0" fill="#dcb6a6"/></g>
<g clip-path="url(#zc43)"><rect x="812.1" y="253.4" width="35.3" height="16.6" fill="#242424"/><text x="829.8" y="262.7" font-size="2.300" fill="#a6a6a6" text-anchor="middle">Alejandro López</text></g>
<g clip-path="url(#zc44)"><rect x="848.6" y="253.4" width="35.3" height="16.6" fill="#242424"/><text x="866.2" y="262.7" font-size="2.300" fill="#a6a6a6" text-anchor="middle">Ricardo Castro</text></g>
</g>
<rect x="881.500" y="216" width="4.500" height="11" fill="#3a3a3a"/><path d="M883 219.500l1.800 2-1.800 2z" fill="#fff"/>
<rect x="699.500" y="216" width="3.600" height="11" fill="#3a3a3a"/><path d="M702.200 219.500l-1.800 2 1.800 2z" fill="#fff"/>
<circle cx="882.800" cy="234.600" r="1.300" fill="#3a78e0"/><circle cx="882.800" cy="255" r="1.300" fill="#3a78e0"/>
</svg>
<!-- link preview footer -->
<div class="abs" style="left:699.500px;top:270px;width:186.500px;height:29px;background:#f1f2f4;"></div>
<div class="abs" style="left:873.300px;top:266.300px;width:8.400px;height:8.400px;border-radius:50%;background:#fff;box-shadow:0 0 1px rgba(0,0,0,.4);"></div>
<div class="t" style="left:876.700px;top:267.300px;font-size:6px;font-weight:bold;font-family:'Liberation Serif',serif;color:#555;">i</div>
<svg class="abs" style="left:700px;top:271px" width="186" height="28" viewBox="700 271 186 28" font-family="Liberation Sans, sans-serif">
<text x="704" y="277.600" font-size="4.300" fill="#8a8d92" textLength="57.500" lengthAdjust="spacingAndGlyphs">SPANISH.XINHUANET.COM</text>
<g font-size="7" font-weight="bold" fill="#1c1e26"><text x="703.800" y="286.500" textLength="171.600" lengthAdjust="spacingAndGlyphs">Médicos chinos y chilenos intercambian experiencias sobre</text>
<text x="703.800" y="293.700" textLength="72" lengthAdjust="spacingAndGlyphs">diagnóstico de COVID-19</text></g>
</svg>

  <!-- CGTN broadcast frame -->
<svg class="abs" style="left:696px;top:312.500px" width="193.500" height="108" viewBox="696 312.500 193.500 108" font-family="Liberation Sans, sans-serif">
  <defs>
    <filter id="cb" x="-5%" y="-5%" width="110%" height="110%"><feGaussianBlur stdDeviation=".7"/></filter>
    <linearGradient id="cbg" x1="0" y1="0" x2="1" y2="1"><stop offset="0" stop-color="#525ba0"/><stop offset=".5" stop-color="#4e579a"/><stop offset="1" stop-color="#495294"/></linearGradient>
    <linearGradient id="cwh" x1="0" y1="0" x2="1" y2="0"><stop offset="0" stop-color="#f4f5f8"/><stop offset=".7" stop-color="#eceef4"/><stop offset="1" stop-color="#c4c9e0"/></linearGradient>
  </defs>
  <rect x="696" y="312.500" width="193.500" height="108" fill="url(#cbg)"/>
  <g filter="url(#cb)">
    <!-- chair -->
    <rect x="754.500" y="364" width="9.500" height="58" fill="#a89878"/>
    <rect x="757" y="367" width="5" height="52" fill="#c2b08a"/>
    <!-- hair -->
    <path d="M776 374c-2-22 0-40 7-48 6-7 20-7 26 0 8 9 10 30 9 52l-10 4h-24z" fill="#14141a"/>
    <!-- body -->
    <path d="M760 421c0-24 2-48 12-54l14-6h20l14 6c8 6 10 30 10 54z" fill="#17171c"/>
    <!-- face -->
    <ellipse cx="794" cy="342" rx="11" ry="13" fill="#c9a594"/>
    <path d="M781 337c1-10 8-12 13-11 6-1 12 1 14 11-5-5-9-6-14-6s-9 1-13 6z" fill="#14141a"/><rect x="784" y="337.500" width="20" height="1.600" fill="#3a2a28" opacity=".7"/>
    <!-- mask -->
    <path d="M781.500 342c8-3 16-3 24 0 0 8-3 15-8 17h-8c-5-2-8-9-8-17z" fill="#7fc0dc"/>
    <!-- hand & mic -->
    <ellipse cx="792" cy="359" rx="5.500" ry="4.500" fill="#c9a594"/>
    <rect x="788.500" y="362" width="5" height="16" rx="2" fill="#22222a"/>
    <!-- shirt -->
    <path d="M793 384l6-4v28h-6z" fill="#4f8a86"/>
  </g>
  <text x="714.500" y="325.400" font-size="7.400" fill="#8791c8" textLength="21.600" lengthAdjust="spacingAndGlyphs">CGTN</text>
  <rect x="868" y="317.600" width="11" height="5.600" rx=".8" fill="#d8b544"/>
  <text x="869.200" y="322.200" font-size="4.200" font-weight="bold" fill="#7a6420" textLength="8.600" lengthAdjust="spacingAndGlyphs">LIVE</text>
  <!-- lower third -->
  <rect x="706" y="391" width="32" height="7.600" fill="#f3f0f0"/>
  <text x="708.400" y="396.400" font-size="3.800" font-weight="bold" fill="#c03044" textLength="27.200" lengthAdjust="spacingAndGlyphs">HAPPENING NOW</text>
  <rect x="738" y="391" width="32" height="7.800" fill="#c6a447"/>
  <text x="742" y="397.300" font-size="5.600" font-weight="bold" fill="#f4ead0" textLength="21.600" lengthAdjust="spacingAndGlyphs">CAO WEI</text>
  <rect x="738" y="398.600" width="151.500" height="12.600" fill="url(#cwh)"/>
  <rect x="706" y="398.600" width="32" height="12.600" fill="#1a2868"/>
  <text x="708.600" y="403.600" font-size="4.200" font-weight="bold" fill="#e8ecf8" textLength="26.800" lengthAdjust="spacingAndGlyphs">CONTAINING</text>
  <text x="708.600" y="409.400" font-size="5.400" font-weight="bold" fill="#fff" textLength="26.800" lengthAdjust="spacingAndGlyphs">COVID-19</text>
  <g font-size="5" font-weight="bold" fill="#1d2a62">
    <text x="742" y="404.300" textLength="108" lengthAdjust="spacingAndGlyphs">Deputy Director, Medical Dept. of Infectious Diseases</text>
    <text x="742" y="409.900" textLength="78" lengthAdjust="spacingAndGlyphs">Peking Union Medical College Hospital</text>
  </g>
  <rect x="706" y="411.200" width="183.500" height="5" fill="#2e3036"/>
  <rect x="706" y="411.200" width="32" height="5" fill="#e8e8ee"/>
  <text x="707.600" y="415" font-size="3.200" font-weight="bold" fill="#1a2868" textLength="24" lengthAdjust="spacingAndGlyphs">GLOBAL BUSINESS</text>
  <text x="739.600" y="415" font-size="3.300" fill="#d8d8dc" textLength="150" lengthAdjust="spacingAndGlyphs">confirmed cases &#160;&#160;&#160;&#160;&#160;&#160;&#160; COVID-19: Italy reports 34,727 cases in total, 1,809 deaths &#160;&#160;&#160;&#160;&#160;&#160;&#160; COVID-</text>
</svg>

</div></div>

<!-- ===== phone status bar (cropped at top) ===== -->
<svg class="abs" style="left:0;top:0" width="1080" height="20" viewBox="0 0 1080 20">
  <g fill="#fff" stroke="none">
    <!-- cut-off boxes above HD -->
    <rect x="78" y="-2" width="14" height="3.2" rx="1"/>
    <rect x="95" y="-2" width="6" height="3.2" rx="1"/>
    <!-- HD badge -->
    <rect x="78" y="8.300" width="13.400" height="9" rx="2.200"/><rect x="79.300" y="9.600" width="10.800" height="6.400" rx="1.100" fill="#000"/>
    <rect x="94.6" y="9.4" width="6.2" height="7.8" rx="1.2"/>
    <!-- signal 1 -->
    <rect x="115.0" y="9.5" width="2.400" height="2.3"/>
    <rect x="118.2" y="6.8" width="2.400" height="5.0"/>
    <rect x="121.8" y="3.4" width="2.400" height="8.4"/>
    <rect x="126.0" y="-1.2" width="2.400" height="13.0"/>
    <rect x="128.8" y="-1.2" width="2.400" height="13.0"/>
    <!-- signal 2 -->
    <rect x="144.2" y="9.5" width="2.400" height="2.3"/>
    <rect x="147.4" y="6.8" width="2.400" height="5.0"/>
    <rect x="151.0" y="3.4" width="2.400" height="8.4"/>
    <rect x="155.2" y="-1.2" width="2.400" height="13.0"/>
    <rect x="158.0" y="-1.2" width="2.400" height="13.0"/>
    <!-- wifi -->
    <circle cx="173" cy="10.2" r="1.7"/>
    <path d="M179.6 8.2l-2 1.6 2 1.6zM180.4 8.2l2 1.6-2 1.6z" opacity=".9"/>
  </g>
  <g fill="none" stroke="#fff" stroke-linecap="round">
    <path d="M169.400 6.800a5.200 5.200 0 0 1 7.200 0" stroke-width="2.300"/>
    <path d="M166.400 3.400a9.400 9.400 0 0 1 13.200 0" stroke-width="2.300"/>
    <path d="M164.400 -0.200a12.600 12.600 0 0 1 17.200 0" stroke-width="2"/>
  </g>
  <text x="80" y="15.600" font-family="Liberation Sans, sans-serif" font-weight="bold" font-size="7.600" fill="#fff" stroke="#fff" stroke-width=".3" textLength="9.400" lengthAdjust="spacingAndGlyphs">HD</text>
  <text x="95.7" y="15.9" font-family="Liberation Sans, sans-serif" font-weight="bold" font-size="7.2" fill="#000">2</text>
  <text x="106.800" y="3.300" font-family="Liberation Sans, sans-serif" font-weight="bold" font-size="6.400" fill="#fff" stroke="#fff" stroke-width=".25">4G</text>
  <text x="135.800" y="3.300" font-family="Liberation Sans, sans-serif" font-weight="bold" font-size="6.400" fill="#fff" stroke="#fff" stroke-width=".25">4G</text>
  <text x="188.6" y="3.2" font-family="Liberation Sans, sans-serif" font-size="10.4" fill="#fff" textLength="17" lengthAdjust="spacingAndGlyphs">205</text>
  <text x="188.8" y="15.4" font-family="Liberation Sans, sans-serif" font-size="9.7" fill="#fff" textLength="16.2" lengthAdjust="spacingAndGlyphs">K/s</text>
  <!-- blue wings icon -->
  <path d="M213.800 8.200q2.600-7 6.800-3 4.200-4 6.800 3-3.200-2.600-6.800-.400-3.600-2.200-6.800.400z" fill="#2a56e0"/>
  <path d="M216 6.600q1.600-3.400 4.600-.600 3-2.800 4.600.600" fill="none" stroke="#4f7af0" stroke-width="1"/>
  <!-- hourglass -->
  <path d="M236.600 -1h10v1.400c0 2.600-2.600 3.600-3.600 5 1 1.400 3.600 2.600 3.600 5.200v1.400h-10v-1.400c0-2.600 2.600-3.800 3.600-5.200-1-1.400-3.600-2.400-3.600-5z" fill="#fff"/>
  <path d="M239 9.600c.200-1.600 1.800-2.400 2.600-3.400.800 1 2.400 1.800 2.600 3.400z" fill="#000"/>
  <!-- light app icon -->
  <rect x="253" y="-3" width="16" height="15.6" rx="2.4" fill="#eef6fb"/>
  <path d="M255.800 9.400a5.600 5.600 0 0 1 10.800-3.600" fill="none" stroke="#38aee2" stroke-width="3.200"/><path d="M262 1.200a5.600 5.600 0 0 1 5 5" fill="none" stroke="#8fd4f2" stroke-width="3"/><circle cx="264.800" cy="9.600" r="1.600" fill="#f6c9c9"/>
  <!-- blue bulb icon -->
  <rect x="273" y="-3" width="16" height="15.600" rx="2.4" fill="#2a52d6"/>
  <path d="M281-1.200a4.200 4.200 0 0 1 2.200 7.800v1.800h-4.400v-1.800a4.200 4.200 0 0 1 2.200-7.800z" fill="none" stroke="#dfe9ff" stroke-width="1.300"/>
  <path d="M279.400 10.200h3.200" stroke="#dfe9ff" stroke-width="1.100"/>
  <!-- globe -->
  <circle cx="301.600" cy="4" r="7.600" fill="#f2f2f2"/>
  <path d="M296 -1.200l5.600 5.200 6.400-4.800M301.600 4l-3 7M301.600 4l7 3.600M295 6.400l4 4.800" stroke="#222" stroke-width=".9" fill="none"/>
  <!-- more dots -->
  <circle cx="317.600" cy="4.700" r="1.350" fill="#fff"/><circle cx="322.300" cy="4.700" r="1.350" fill="#fff"/><circle cx="326.800" cy="4.700" r="1.350" fill="#fff"/>

  <!-- right cluster -->
  <!-- headphones -->
  <path d="M843 8.400v-5a5 5 0 0 1 10 0v5" fill="none" stroke="#fff" stroke-width="2"/>
  <rect x="841.400" y="4.600" width="3.800" height="6.400" rx="1.400" fill="#fff"/>
  <rect x="850.800" y="4.600" width="3.800" height="6.400" rx="1.400" fill="#fff"/>
  <!-- eye -->
  <path d="M860.600 3.800c4-7.400 14-7.400 18 0-4 7.400-14 7.400-18 0z" fill="#fff"/>
  <circle cx="869.600" cy="3.800" r="3.600" fill="#000"/><circle cx="869.600" cy="3.800" r="1.700" fill="#fff"/>
  <!-- alarm -->
  <circle cx="892" cy="4.400" r="6" fill="#fff"/>
  <path d="M886 -1.600l2.600-2M898-1.600l-2.600-2" stroke="#fff" stroke-width="2.200"/>
  <path d="M887.600 9.600l-1.600 1.800M896.400 9.600l1.600 1.800" stroke="#fff" stroke-width="1.600"/>
  <path d="M892 0.600v4.200l2.600 1.800" stroke="#000" stroke-width="1.100" fill="none"/>
  <!-- bluetooth -->
  <path d="M906 0.600l7.600 6.400-3.800 3.600v-13l3.800 3.200-7.600 6.600" fill="none" stroke="#fff" stroke-width="1.400" stroke-linejoin="round"/>
  <!-- mic -->
  <rect x="924.600" y="-4" width="5.600" height="10" rx="2.800" fill="#fff"/>
  <path d="M922.400 2.600a5 5 0 0 0 10 0M927.400 7.600v3.400" fill="none" stroke="#fff" stroke-width="1.500"/>
  <!-- vibrate -->
  <rect x="944.400" y="-2" width="7.600" height="12.400" rx="1.200" fill="none" stroke="#fff" stroke-width="1.600"/>
  <path d="M940.800 -1l-1 2 1.400 2-1.400 2 1.400 2-1 1.600M955.400 -1l1 2-1.400 2 1.400 2-1.400 2 1 1.600" fill="none" stroke="#fff" stroke-width="1.300"/>
  <!-- battery -->
  <rect x="962.800" y="-3" width="24.400" height="13.600" rx="2" fill="none" stroke="#fff" stroke-width="1.600"/>
  <rect x="964.600" y="-2" width="14.600" height="10.800" fill="#fff"/>
  <rect x="988.600" y="1.400" width="2.200" height="6.400" rx=".8" fill="#fff"/>
  <text x="996.600" y="10.800" font-family="Liberation Sans, sans-serif" font-size="15.800" fill="#fff" textLength="39.200" lengthAdjust="spacingAndGlyphs">20:03</text>
</svg>

<!-- ===== speaker video thumbnail ===== -->
<div class="abs" id="thumb" style="left:902px;top:16px;width:162.300px;height:108.600px;overflow:hidden;background:#a3a5a8;">
  <svg width="163" height="109" viewBox="0 0 163 109" style="position:absolute;left:0;top:0">
    <defs>
      <filter id="tb" x="-20%" y="-20%" width="140%" height="140%"><feGaussianBlur stdDeviation="2.2"/></filter>
      <filter id="tb2" x="-20%" y="-20%" width="140%" height="140%"><feGaussianBlur stdDeviation="1.2"/></filter>
      <linearGradient id="tbg" x1="0" y1="0" x2="1" y2="0"><stop offset="0" stop-color="#90949a"/><stop offset=".5" stop-color="#b2b4b6"/><stop offset="1" stop-color="#a2a4a8"/></linearGradient>
    </defs>
    <rect width="163" height="109" fill="url(#tbg)"/>
    <g filter="url(#tb2)">
      <rect x="36" y="2" width="117" height="44.500" fill="#c0c1c3" stroke="#5d5f63" stroke-width="3.400"/>
      <rect x="0" y="60" width="40" height="50" fill="#adafb2"/>
      <rect x="110" y="50" width="55" height="60" fill="#b4b5b7"/>
    </g>
    <g filter="url(#tb)">
      <path d="M41 108c-2-30 4-62 20-74 9-6 22-6 32 0 16 10 22 44 19 74z" fill="#17171a"/>
      <ellipse cx="75.500" cy="70" rx="20.500" ry="31" fill="#ab8c80"/><ellipse cx="70" cy="88" rx="14" ry="12" fill="#8c6e66" opacity=".6"/>
      <path d="M54 50c4-12 14-14 21-12 8-2 18 0 22 12-8-8-14-9-22-9s-14 1-21 9z" fill="#1a1a1c"/>
      <ellipse cx="76" cy="79" rx="7" ry="3.400" fill="#8f3a3c"/>
      <ellipse cx="65" cy="56" rx="4" ry="1.600" fill="#3a2a28"/><ellipse cx="87" cy="56" rx="4" ry="1.600" fill="#3a2a28"/>
      <rect x="58" y="98" width="36" height="12" fill="#4a3a38"/>
    </g>
  </svg>
  <div class="abs" id="tov" style="left:0;top:52px;width:163px;height:57px;background:linear-gradient(to bottom,rgba(0,0,0,0) 0%,rgba(0,0,0,.16) 30%,rgba(0,0,0,.36) 60%,rgba(0,0,0,.58) 84%,rgba(0,0,0,.86) 100%);"></div>
  <svg class="abs" style="left:3px;top:83px" width="18" height="21" viewBox="0 0 18 21">
    <rect x="5" y="1" width="8" height="12.400" rx="4" fill="#fff"/>
    <path d="M1.800 9.400a7.200 7.200 0 0 0 14.400 0M9 16.600v3.400" fill="none" stroke="#fff" stroke-width="2" stroke-linecap="round"/>
  </svg>
  <div class="t" style="left:21.500px;top:85.500px;font-size:15.800px;font-weight:500;color:#fff;opacity:.999;will-change:opacity;">曹玮主任</div>
</div>

<!-- ===== bottom-left controls ===== -->
<svg class="abs" style="left:8px;top:410px" width="40" height="36" viewBox="8 410 40 36">
  <g stroke="#9a9a9a" stroke-width="2.300" stroke-linecap="round">
    <path d="M20 422.600h11M23.400 430.600h11M20 438.400h14.600"/>
  </g>
  <circle cx="15" cy="422.600" r="1.300" fill="#9a9a9a"/><circle cx="19.400" cy="430.600" r="1.300" fill="#9a9a9a"/><circle cx="15" cy="438.400" r="1.300" fill="#9a9a9a"/>
  <circle cx="35.400" cy="421.200" r="5" fill="#f0403c"/>
</svg>
<svg class="abs" style="left:5px;top:459px" width="20" height="22" viewBox="0 0 20 22">
  <rect x="5.600" y="1.600" width="8.800" height="12.600" rx="4.400" fill="#fff"/>
  <path d="M2.600 10a7.400 7.400 0 0 0 14.800 0M10 17.400v3" fill="none" stroke="#fff" stroke-width="2.200" stroke-linecap="round"/>
</svg>
<div class="t" style="left:30.500px;top:462.700px;font-size:17.500px;font-weight:500;color:#fff;">曹玮主任的屏幕共享</div>
<!-- pager dots -->
<svg class="abs" style="left:520px;top:452px" width="40" height="20" viewBox="520 452 40 20"><circle cx="530.500" cy="461.700" r="4.200" fill="#fff"/><circle cx="549.300" cy="461.700" r="4.200" fill="#7c7c7c"/></svg>



</div>
</body>
</html>
